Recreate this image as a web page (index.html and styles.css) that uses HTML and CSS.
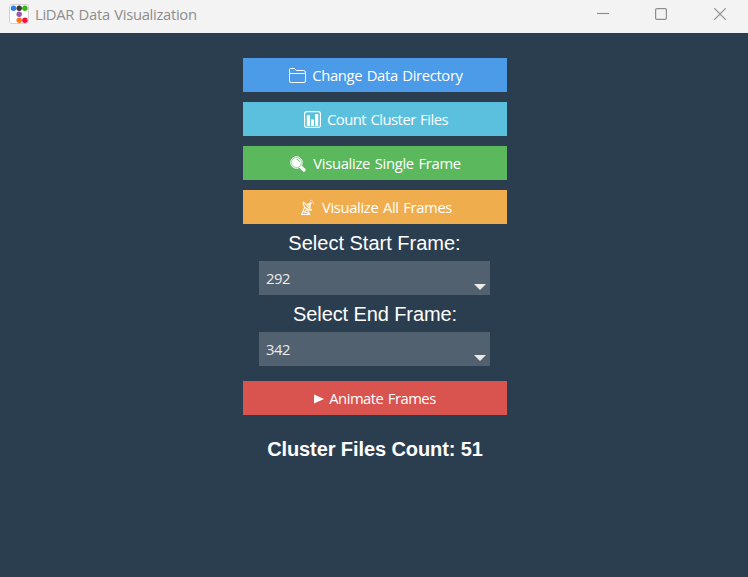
FILE: index.html
```html
<!DOCTYPE html>
<html lang="en">
<head>
<meta charset="utf-8">
<title>LiDAR Data Visualization</title>
<link rel="stylesheet" href="styles.css">
</head>
<body>
<header class="titlebar">
  <svg class="app-icon" width="20" height="20" viewBox="0 0 20 20">
    <rect x=".5" y=".5" width="19" height="19" rx="2.5" fill="#fff" stroke="#d2d2d2"/>
    <circle cx="4.5" cy="4.2" r="2.7" fill="#2f80e0"/>
    <circle cx="10.2" cy="4.2" r="2.7" fill="#3a3a3e"/>
    <circle cx="15.9" cy="4.2" r="2.7" fill="#3cb414"/>
    <circle cx="10.2" cy="10.3" r="2.7" fill="#9b59b6"/>
    <circle cx="10.2" cy="16.3" r="2.7" fill="#ff7514"/>
    <circle cx="15.9" cy="16.3" r="2.7" fill="#ff0a3c"/>
  </svg>
  <h1 class="title">LiDAR Data Visualization</h1>
  <div class="controls">
    <svg class="minimize" width="12" height="12" viewBox="0 0 12 12"><path d="M0 5.5h12"/></svg>
    <svg width="12" height="12" viewBox="0 0 12 12"><rect x=".6" y=".6" width="10.8" height="10.8" rx="1.2"/></svg>
    <svg width="12" height="12" viewBox="0 0 12 12"><path d="M.3.3l11.4 11.4M11.7.3L.3 11.7"/></svg>
  </div>
</header>
<main class="panel">
  <button class="btn directory">
    <svg width="17" height="16" viewBox="0 0 17 16" fill="none" stroke="#fff" stroke-width="1"><path d="M.5 13.5v-12q0-1 1-1h4l1.8 2h7.2q2 0 2 2v8.500q0 1.500-1.500 1.500H2q-1.500 0-1.500-1.500M.5 5.500h13.500q2.500 0 2.500-1"/></svg>
    <span>Change Data Directory</span>
  </button>
  <button class="btn count">
    <svg width="17" height="17" viewBox="0 0 17 17"><rect x=".6" y=".6" width="15.800" height="15.800" rx="2.200" fill="none" stroke="#fff" stroke-width="1.100"/><path fill="#fff" d="M2.800 4.300H6V15H2.800zM7 8.500h3V15H7zM11 3h3.200v12H11z"/></svg>
    <span>Count Cluster Files</span>
  </button>
  <button class="btn single">
    <svg width="16" height="16" viewBox="0 0 16 16"><circle cx="6.500" cy="6.500" r="5.800" fill="#fff" fill-opacity=".3" stroke="#fff"/><circle cx="6.500" cy="6.500" r="4.600" fill="#fff"/><path d="M6.500 3.200q2.700.3 3 3" fill="none" stroke="#5cb85c" stroke-width=".8"/><path d="M10.500 10.500l1 1" stroke="#fff" stroke-width="2"/><path d="M11.500 11.500l2.500 2.500" stroke="#fff" stroke-width="3.200" stroke-linecap="round"/></svg>
    <span>Visualize Single Frame</span>
  </button>
  <button class="btn all">
    <svg width="14" height="17" viewBox="0 0 14 17" fill="none" stroke="#fff" stroke-width="1.1"><path d="M2.500 3.200Q1.500 6 4.500 8.800T11 11.200Q9.500 10.800 6.500 7.200T2.500 3.200zM5 6l4.500-2L8.800 9M9.500 4l-1.700 3M3.500 8.500L.7 15.500h8L6.500 11M2 12.500l5.500 2M5.500 10.500L3 14"/><path d="M9 1q3 .2 3.800 4M9 3q1.500 0 2 2" stroke-width=".8" opacity=".75"/></svg>
    <span>Visualize All Frames</span>
  </button>
  <div class="label">Select Start Frame:</div>
  <div class="select"><span>292</span><i class="arrow"></i></div>
  <div class="label end">Select End Frame:</div>
  <div class="select"><span>342</span><i class="arrow"></i></div>
  <button class="btn animate">
    <svg width="10" height="10" viewBox="0 0 10 10"><path d="M0 .5L10 5 0 9.500z" fill="#fff"/></svg>
    <span>Animate Frames</span>
  </button>
  <div class="result">Cluster Files Count: 51</div>
</main>
</body>
</html>
```
FILE: styles.css
```css
* { box-sizing: border-box; }
body {
  margin: 0;
  height: 577px;
  overflow: hidden;
  background: #2b3e50;
  font-family: "Open Sans", "Noto Sans", sans-serif;
}
.titlebar {
  display: flex;
  height: 33px;
  padding: 0 22px 0 9px;
  background: #f3f3f3;
  color: #8e8e8e;
}
.app-icon { margin-top: 4px; }
.title {
  margin: 4px 0 0 6px;
  font-size: 14.8px;
  line-height: 20px;
  font-weight: 400;
  letter-spacing: -0.32px;
  word-spacing: 1px;
  white-space: nowrap;
}
.controls {
  display: flex;
  gap: 47px;
  margin: 8px 0 0 auto;
  fill: none;
  stroke: #8e8e8e;
  stroke-width: 1.2;
}
.minimize { margin: 0 -1px 0 1px; }
.panel {
  display: flex;
  flex-direction: column;
  align-items: center;
  width: 264px;
  margin: 25px 0 0 243px;
  color: #fff;
}
.btn {
  display: flex;
  align-items: center;
  justify-content: center;
  width: 264px;
  height: 34px;
  margin: 0 0 10px;
  padding: 1px 0 0;
  border: 0;
  color: #fff;
  font: 14.8px/20px "Open Sans", "Noto Sans", sans-serif;
  letter-spacing: -0.35px;
  word-spacing: 1px;
  white-space: nowrap;
}
.btn svg { flex: none; }
.btn span { margin-bottom: 2px; }
.directory { gap: 6px; padding-left: 2px; background: #4c9be8; }
.directory svg { margin-top: 1px; }
.count { gap: 6px; padding-left: 2px; letter-spacing: -0.5px; background: #5bc0de; }
.single { gap: 7px; padding-left: 1px; letter-spacing: -0.3px; background: #5cb85c; }
.all { gap: 7px; padding-left: 3px; margin-bottom: 4px; background: #f0ad4e; }
.animate { gap: 5px; margin: 11px 0 19px; letter-spacing: -0.5px; background: #d9534f; }
.animate svg { margin-top: 1px; }
.label {
  height: 33px;
  padding-right: 1px;
  font: 20px/31px "Liberation Sans", Arial, sans-serif;
  white-space: nowrap;
}
.end { padding-right: 0; letter-spacing: -0.1px; }
.select {
  display: flex;
  align-items: flex-end;
  justify-content: space-between;
  width: 231px;
  height: 34px;
  margin: 0 1px 4px 0;
  padding: 0 4px 3px 7px;
  background: #526170;
  color: #ebebeb;
  font-size: 14.8px;
  line-height: 28px;
  letter-spacing: -0.4px;
}
.arrow {
  margin-bottom: 2px;
  border: 0 solid transparent;
  border-width: 6px 6px 0;
  border-top-color: #ebebeb;
}
.result {
  font: bold 20px/30px "Liberation Sans", Arial, sans-serif;
  letter-spacing: -0.09px;
  white-space: nowrap;
}
```
